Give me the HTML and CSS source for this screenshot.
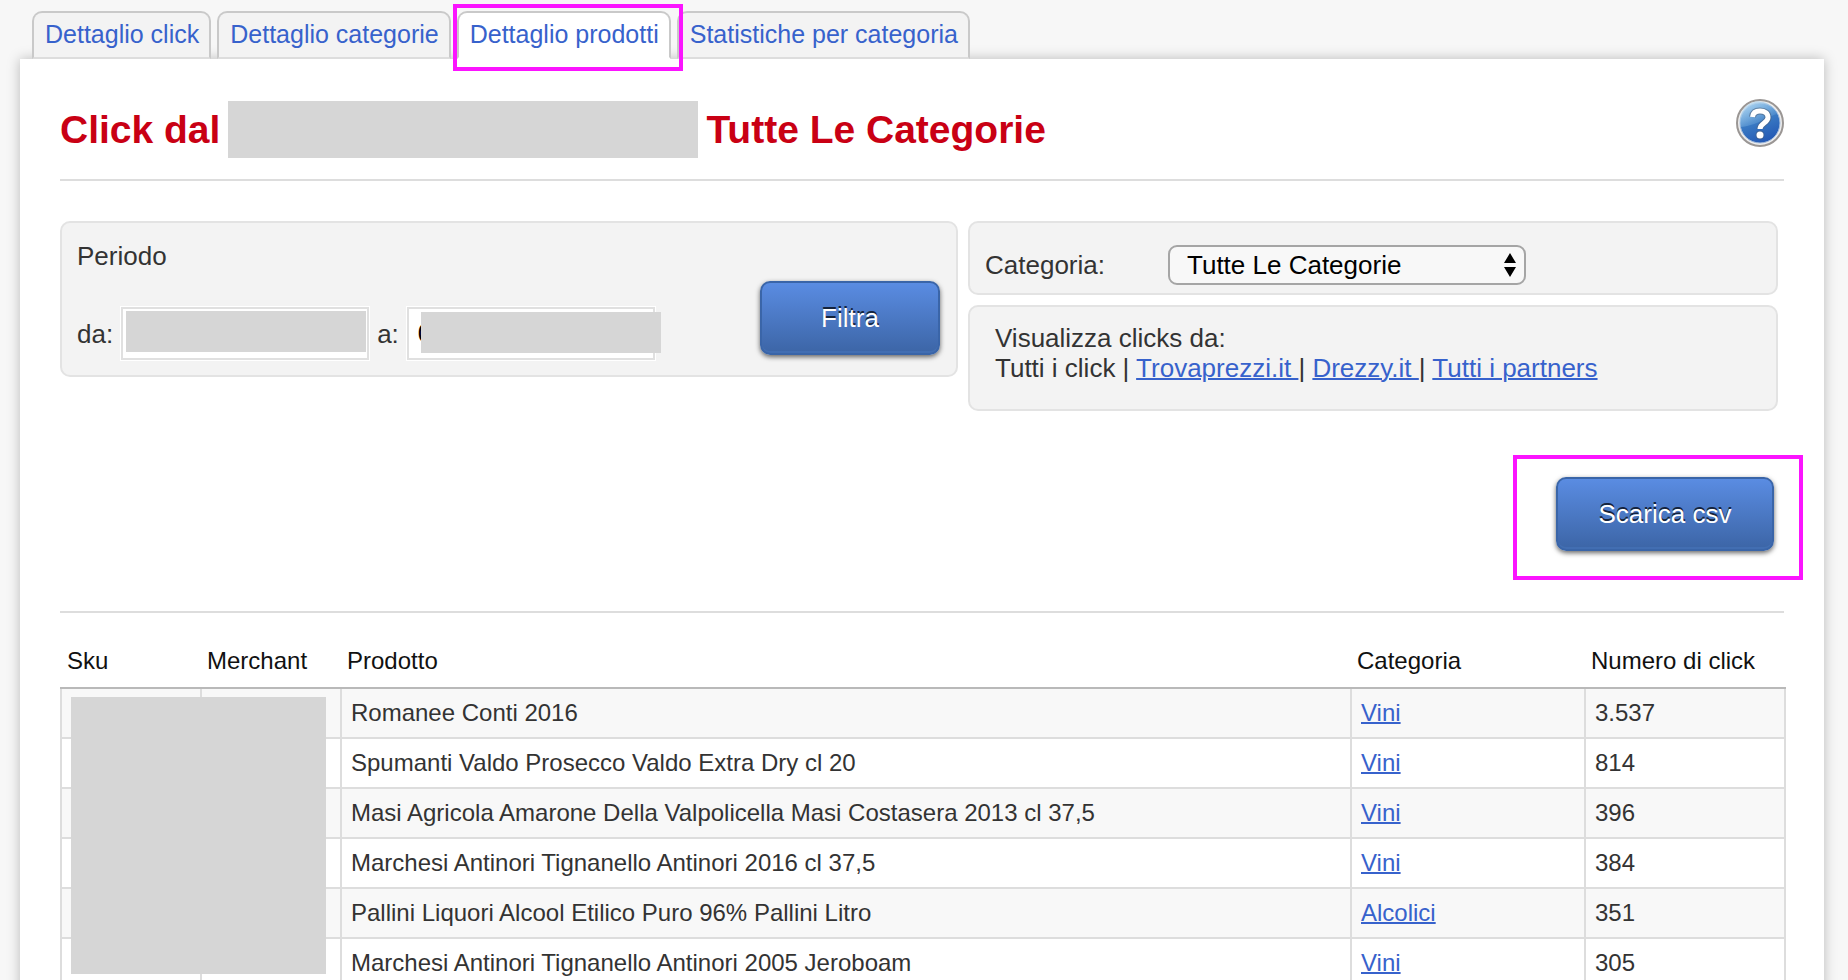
FILE: index.html
```html
<!DOCTYPE html>
<html lang="it">
<head>
<meta charset="utf-8">
<meta name="viewport" content="width=device-width, initial-scale=1">
<title>Dettaglio prodotti</title>
<link rel="stylesheet" href="styles.css">
</head>
<body>
<nav class="tabs">
  <a class="tab" href="#">Dettaglio click</a>
  <a class="tab" href="#">Dettaglio categorie</a>
  <a class="tab tab-active" href="#">Dettaglio prodotti<span class="marker marker-tab"></span></a>
  <a class="tab" href="#">Statistiche per categoria</a>
</nav>
<main class="panel">
  <header class="page-head">
    <h1 class="title"><span>Click dal</span><span class="redacted redacted-title"></span><span>Tutte Le Categorie</span></h1>
    <a class="help" href="#" aria-label="Aiuto">
      <svg width="48" height="48" viewBox="0 0 48 48" aria-hidden="true">
        <defs>
          <linearGradient id="ball" x1="0.2" y1="0" x2="0.6" y2="1">
            <stop offset="0" stop-color="#7db4e2"/>
            <stop offset="0.45" stop-color="#3b7cc4"/>
            <stop offset="1" stop-color="#2358b4"/>
          </linearGradient>
          <linearGradient id="shine" x1="0" y1="0" x2="0.8" y2="1">
            <stop offset="0" stop-color="#c4e4f8" stop-opacity="0.9"/>
            <stop offset="1" stop-color="#6aa6dc" stop-opacity="0.1"/>
          </linearGradient>
        </defs>
        <circle cx="24" cy="24" r="23" fill="#ececec" stroke="#9a9694" stroke-width="2"/>
        <circle cx="24" cy="24" r="20" fill="url(#ball)" stroke="#a9c0de" stroke-width="1"/>
        <path d="M5 28A19 19 0 0 1 41 15C32 17 26 25 5 28Z" fill="url(#shine)"/>
        <path d="M16.500 18C17 13.500 20 12 24 12C29 12 32 14.500 32 18.500C32 24 24 24 24 30" fill="none" stroke="#4a5f7c" stroke-opacity="0.6" stroke-width="7"/>
        <circle cx="24" cy="36" r="4.500" fill="#4a5f7c" fill-opacity="0.6"/>
        <path d="M16.500 18C17 13.500 20 12 24 12C29 12 32 14.500 32 18.500C32 24 24 24 24 30" fill="none" stroke="#fff" stroke-width="5"/>
        <circle cx="24" cy="36" r="3.500" fill="#fff"/>
      </svg>
    </a>
  </header>

  <form class="filters">
    <section class="box period">
      <div class="period-fields">
        <p class="text">Periodo</p>
        <div class="dates">
          <label for="from">da:</label>
          <span class="date"><input id="from" type="text"><span class="redacted redacted-from"></span></span>
          <label for="to">a:</label>
          <span class="date"><input id="to" type="text" value="0"><span class="redacted redacted-to"></span></span>
        </div>
      </div>
      <button class="button" type="button">Filtra</button>
    </section>
    <div class="side">
      <section class="box category">
        <label class="category-label" for="category">Categoria:</label>
        <span class="select-wrap">
          <select id="category" class="select"><option>Tutte Le Categorie</option></select>
          <svg class="arrows" width="12" height="24" viewBox="0 0 12 24" aria-hidden="true"><path d="M6 0L12 10H0ZM0 14H12L6 24Z"/></svg>
        </span>
      </section>
      <section class="box source">
        <p class="text">Visualizza clicks da:</p>
        <p class="text">Tutti i click | <a class="link" href="#">Trovaprezzi.it&nbsp;</a>| <a class="link" href="#">Drezzy.it&nbsp;</a>| <a class="link" href="#">Tutti i partners</a></p>
      </section>
    </div>
  </form>

  <div class="actions">
    <div class="download">
      <button class="button button-wide" type="button">Scarica csv</button>
      <span class="marker marker-download"></span>
    </div>
  </div>

  <div class="table-wrap">
    <table class="products">
      <colgroup><col class="col-code"><col class="col-code"><col><col class="col-category"><col class="col-clicks"></colgroup>
      <thead>
        <tr><th>Sku</th><th>Merchant</th><th>Prodotto</th><th>Categoria</th><th>Numero di click</th></tr>
      </thead>
      <tbody>
        <tr><td></td><td></td><td>Romanee Conti 2016</td><td><a class="link" href="#">Vini</a></td><td>3.537</td></tr>
        <tr><td></td><td></td><td>Spumanti Valdo Prosecco Valdo Extra Dry cl 20</td><td><a class="link" href="#">Vini</a></td><td>814</td></tr>
        <tr><td></td><td></td><td>Masi Agricola Amarone Della Valpolicella Masi Costasera 2013 cl 37,5</td><td><a class="link" href="#">Vini</a></td><td>396</td></tr>
        <tr><td></td><td></td><td>Marchesi Antinori Tignanello Antinori 2016 cl 37,5</td><td><a class="link" href="#">Vini</a></td><td>384</td></tr>
        <tr><td></td><td></td><td>Pallini Liquori Alcool Etilico Puro 96% Pallini Litro</td><td><a class="link" href="#">Alcolici</a></td><td>351</td></tr>
        <tr><td></td><td></td><td>Marchesi Antinori Tignanello Antinori 2005 Jeroboam</td><td><a class="link" href="#">Vini</a></td><td>305</td></tr>
      </tbody>
    </table>
    <span class="redacted redacted-codes"></span>
  </div>
</main>
</body>
</html>
```
FILE: styles.css
```css
* {
  box-sizing: border-box;
}

html {
  scrollbar-width: none;
}

body {
  margin: 0;
  padding: 11px 24px 0 20px;
  background: #f7f7f7;
  color: #333;
  font-family: "Liberation Sans", Arial, sans-serif;
  font-size: 26px;
  line-height: 30px;
}

p, h1 {
  margin: 0;
}

/* Tabs */
.tabs {
  position: relative;
  z-index: 1;
  display: flex;
  gap: 6px;
  padding-left: 12px;
}

.tab {
  position: relative;
  height: 48px;
  padding: 7px 10px 0 11px;
  border: 2px solid #c9c9c9;
  border-bottom-color: #ddd;
  border-radius: 10px 10px 0 0;
  background: #f3f3f3;
  color: #3762cc;
  font-size: 25px;
  line-height: 28px;
  text-decoration: none;
  white-space: nowrap;
}

.tab-active {
  z-index: 1;
  border-bottom-color: #fff;
  background: #fff;
}

/* Highlight frames */
.marker {
  position: absolute;
  border: 4px solid #fb14ff;
  pointer-events: none;
}

.marker-tab {
  inset: -9px -14px -14px -6px;
}

.marker-download {
  inset: -22px -29px -29px -43px;
}

/* Panel */
.panel {
  padding: 40px;
  background: #fff;
  box-shadow: 0 0 12px rgba(0, 0, 0, 0.25);
}

.page-head {
  display: flex;
  justify-content: space-between;
  padding-bottom: 21px;
  border-bottom: 2px solid #ddd;
}

.title {
  display: flex;
  gap: 8px;
  padding-top: 2px;
  color: #c90014;
  font-size: 39px;
  line-height: 57px;
}

.help {
  height: 48px;
}

.help svg {
  display: block;
}

.redacted {
  background: #d6d6d6;
}

.redacted-title {
  width: 470px;
}

/* Filters */
.filters {
  display: grid;
  grid-template-columns: minmax(0, 898fr) minmax(0, 810fr);
  gap: 10px;
  padding: 40px 6px 0 0;
}

.box {
  border: 2px solid #e3e3e3;
  border-radius: 10px;
  background: #f3f3f3;
}

.period {
  display: flex;
  align-items: flex-end;
  justify-content: space-between;
  align-self: start;
  padding: 18px 16px 15px 15px;
}

.period-fields {
  display: grid;
  gap: 36px;
}

.dates {
  display: flex;
  align-items: center;
  gap: 8px;
}

.date {
  position: relative;
}

.date input {
  display: block;
  width: 248px;
  height: 53px;
  padding: 0 9px;
  border: 2px solid #e0e0e0;
  outline: 1px solid #fff;
  background: #fff;
  color: #000;
  font: inherit;
}

.redacted-from,
.redacted-to {
  position: absolute;
  width: 240px;
  height: 41px;
}

.redacted-from {
  top: 4px;
  left: 5px;
}

.redacted-to {
  top: 5px;
  left: 14px;
}

.button {
  width: 180px;
  height: 74px;
  margin-bottom: 5px;
  padding: 0;
  border: 2px solid #3a65a8;
  border-radius: 10px;
  background: linear-gradient(#5a8ce2, #3c65a6);
  box-shadow: 0 2px 5px rgba(0, 0, 0, 0.6), inset 0 -2px 0 #426eb2;
  color: #fff;
  font: inherit;
  text-shadow: 0 -2px 0 #14233c;
}

.button-wide {
  display: block;
  width: 218px;
  margin: 0;
}

.side {
  display: grid;
  gap: 10px;
}

.category {
  display: flex;
  align-items: center;
  padding: 22px 15px 8px;
}

.category-label {
  width: 183px;
}

.select-wrap {
  position: relative;
}

.select {
  display: block;
  width: 358px;
  height: 40px;
  padding: 0 36px 0 17px;
  border: 2px solid #a5a5a5;
  border-radius: 9px;
  appearance: none;
  background: #f8f8f8;
  color: #000;
  font: inherit;
}

.arrows {
  position: absolute;
  top: 8px;
  right: 10px;
  pointer-events: none;
}

.source {
  padding: 16px 25px 26px;
}

.link {
  color: #3762cc;
  text-decoration: underline;
  text-decoration-thickness: 2px;
}

/* Download */
.actions {
  display: flex;
  justify-content: flex-end;
  padding: 66px 10px 60px 0;
  border-bottom: 2px solid #ddd;
}

.download {
  position: relative;
}

/* Products */
.table-wrap {
  position: relative;
  margin: 34px -2px 0 0;
}

.products {
  width: 100%;
  border-spacing: 0;
  table-layout: fixed;
  font-size: 24px;
  line-height: 28px;
}

.col-code {
  width: 140px;
}

.col-category {
  width: 234px;
}

.col-clicks {
  width: 202px;
}

.products th {
  padding: 0 0 12px 7px;
  border-bottom: 2px solid #b9b9b9;
  color: #111;
  font-weight: normal;
  text-align: left;
}

.products td {
  height: 50px;
  padding: 10px 9px;
  border-bottom: 2px solid #ddd;
  border-left: 2px solid #ddd;
}

.products td:last-child {
  border-right: 2px solid #ddd;
}

.products tbody tr:nth-child(odd) {
  background: #f8f8f8;
}

.redacted-codes {
  position: absolute;
  top: 50px;
  left: 11px;
  width: 255px;
  height: 277px;
}
```
